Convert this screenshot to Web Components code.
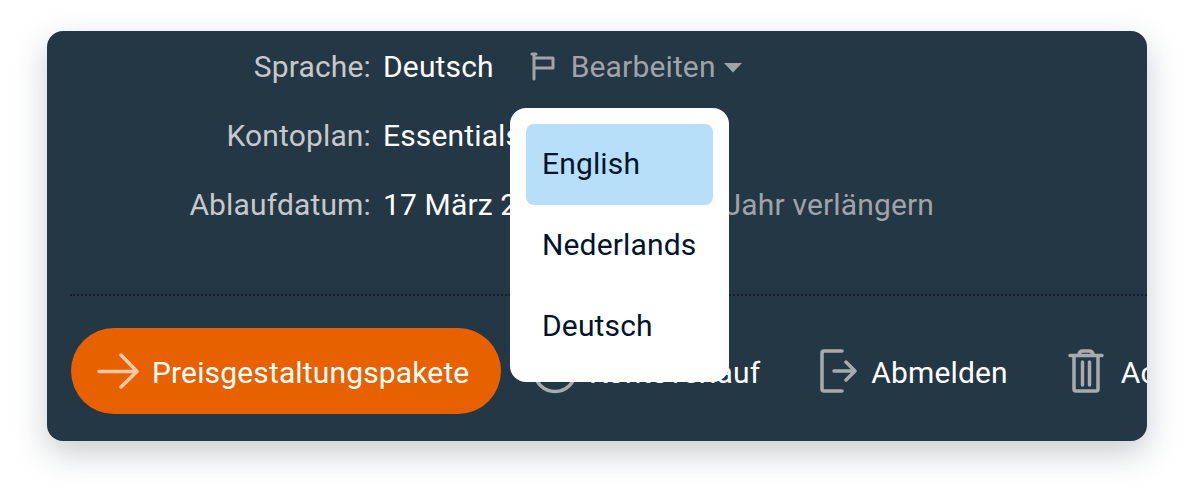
<!DOCTYPE html>
<html lang="de">
<head>
<meta charset="utf-8">
<title>Konto</title>
<style>
  html, body { margin: 0; height: 100%; background: #fff; overflow: hidden; }
  body { padding: 31px 53px 0 47px; box-sizing: border-box; font-family: Roboto, "Liberation Sans", sans-serif; }
</style>
</head>
<body>
<template id="info-row-tpl">
  <style>
    :host { display: grid; grid-template-columns: 324px auto; column-gap: 12px; height: 69px; align-items: center; font-size: 30px; letter-spacing: .15px; }
    .label { text-align: right; color: #c5c9cd; }
    .value { color: #fff; display: flex; align-items: center; white-space: nowrap; }
  </style>
  <span class="label"><slot name="label"></slot></span>
  <span class="value"><slot></slot></span>
</template>

<template id="action-link-tpl">
  <style>
    :host { display: inline-flex; align-items: center; gap: 16px; color: #fff; font-size: 30px; letter-spacing: .15px; white-space: nowrap; }
    ::slotted(svg) { flex: none; display: block; }
    span { margin-top: 2px; }
  </style>
  <slot name="icon"></slot>
  <span><slot></slot></span>
</template>

<template id="lang-menu-tpl">
  <style>
    :host { position: absolute; left: 463px; top: 77px; width: 219px; box-sizing: border-box; padding: 16px 16px 15px; background: #fff; border-radius: 16px; display: block; color: #00142d; font-size: 30px; letter-spacing: .15px; }
    ul { list-style: none; margin: 0; padding: 0; }
    li { height: 81px; line-height: 79px; padding-left: 16px; border-radius: 8px; white-space: nowrap; }
    li.active { background: #b8dff9; }
  </style>
  <ul>
    <li class="active">English</li>
    <li>Nederlands</li>
    <li>Deutsch</li>
  </ul>
</template>

<template id="account-card-tpl">
  <style>
    :host { display: block; position: relative; width: 1100px; height: 410px; box-sizing: border-box; background: #243745; border-radius: 16px; box-shadow: 0 12px 32px rgba(37,55,70,.25); overflow: hidden; padding-top: 1px; }
    .rows { height: 262px; border-bottom: 2px dotted #111e2a; margin-left: 23px; }
    .rows ::slotted(info-row) { margin-left: -23px; }
    .actions { display: flex; align-items: center; margin: 32px 0 0 24px; white-space: nowrap; }
  </style>
  <div class="rows"><slot name="rows"></slot></div>
  <div class="actions"><slot name="actions"></slot></div>
  <slot name="overlay"></slot>
</template>

<account-card>
  <info-row slot="rows">
    <span slot="label">Sprache:</span>
    Deutsch
    <svg width="26" height="30" viewBox="0 0 26 30" style="margin-left:36px;margin-right:15px" fill="none" stroke="#9ea4aa" stroke-width="3" stroke-linecap="round" stroke-linejoin="round">
      <path d="M4 2V27M2 2H6M4 6H23V16H4"/>
    </svg>
    <span style="color:#9ea4aa">Bearbeiten</span>
    <svg width="18" height="10" viewBox="0 0 18 10" style="margin-left:8px;margin-top:3px"><path d="M0 0H18L9 9.500Z" fill="#9ea4aa"/></svg>
  </info-row>
  <info-row slot="rows">
    <span slot="label">Kontoplan:</span>
    Essentials
  </info-row>
  <info-row slot="rows">
    <span slot="label">Ablaufdatum:</span>
    17 März 2022
    <span style="color:#9ea4aa;margin-left:78px">Um 1 Jahr verlängern</span>
  </info-row>

  <price-button slot="actions">Preisgestaltungspakete</price-button>

  <action-link slot="actions" style="margin-left:32px;gap:12px">
    <svg slot="icon" width="44" height="46" viewBox="0 0 44 46" fill="none" stroke="#a6abb0" stroke-width="3.500" stroke-linecap="round"><circle cx="22" cy="23" r="20.500"/><path d="M22 11V23L30 29"/></svg>
    Kontoverlauf
  </action-link>

  <action-link slot="actions" style="margin-left:60px;gap:14px">
    <svg slot="icon" width="37" height="44" viewBox="0 0 37 44" fill="none" stroke="#a6abb0" stroke-width="3.500" stroke-linecap="round" stroke-linejoin="round"><path d="M22 2H4Q2 2 2 4V40Q2 42 4 42H22M14 22H35M26 13L35 22L26 31"/></svg>
    Abmelden
  </action-link>

  <action-link slot="actions" style="margin-left:60px;gap:17px">
    <svg slot="icon" width="36" height="44" viewBox="0 0 36 44" fill="none" stroke="#a6abb0" stroke-width="3.500" stroke-linecap="round" stroke-linejoin="round"><path d="M2 6.500H34M11 6Q11 2 15 2H21Q25 2 25 6M6 7V40Q6 42 8 42H28Q30 42 30 40V7M14.500 13V36M21.500 13V36"/></svg>
    Account löschen
  </action-link>

  <lang-menu slot="overlay"></lang-menu>
</account-card>

<script>
  function fromTemplate(id) {
    return class extends HTMLElement {
      constructor() {
        super();
        this.attachShadow({ mode: 'open' });
        this.shadowRoot.appendChild(document.getElementById(id).content.cloneNode(true));
      }
    };
  }

  customElements.define('account-card', fromTemplate('account-card-tpl'));
  customElements.define('info-row', fromTemplate('info-row-tpl'));
  customElements.define('action-link', fromTemplate('action-link-tpl'));
  customElements.define('lang-menu', fromTemplate('lang-menu-tpl'));

  class PriceButton extends HTMLElement {
    constructor() {
      super();
      this.attachShadow({ mode: 'open' });
      this.shadowRoot.innerHTML = `
        <style>
          :host { display: inline-flex; align-items: center; flex: none; box-sizing: border-box; width: 430px; height: 86px; padding-left: 26px; gap: 13px; background: #e86100; border-radius: 43px; color: #fff; font-size: 30px; letter-spacing: .15px; white-space: nowrap; }
          svg { flex: none; display: block; }
          span { margin-top: 2px; }
        </style>
        <svg width="42" height="36" viewBox="0 0 42 36" fill="none" stroke="#ffc8a6" stroke-width="3.500" stroke-linecap="round" stroke-linejoin="round">
          <path d="M2 18.500H40M24 2L40 18.500L24 34"/>
        </svg>
        <span><slot></slot></span>
      `;
    }
  }
  customElements.define('price-button', PriceButton);
</script>
</body>
</html>
